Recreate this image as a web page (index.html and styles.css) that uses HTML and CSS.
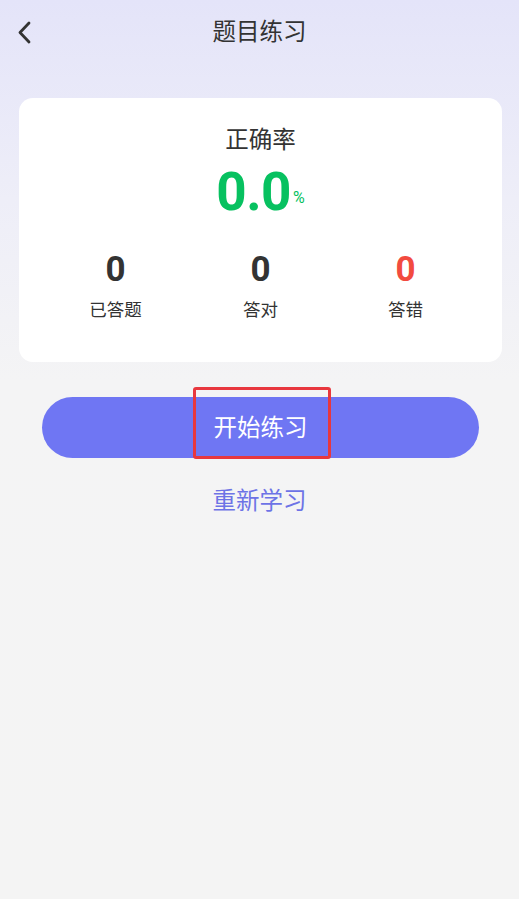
FILE: index.html
```html
<!DOCTYPE html>
<html lang="zh-CN">
<head>
<meta charset="utf-8">
<title>题目练习</title>
<link rel="stylesheet" href="styles.css">
</head>
<body>
<div class="page">
  <header class="navbar">
    <div class="back">
      <svg width="16" height="24" viewBox="0 0 16 24"><path d="M12 2 L3 11.5 L12 21" fill="none" stroke="#333" stroke-width="2.8" stroke-linecap="round" stroke-linejoin="round"/></svg>
    </div>
    <div class="title">题目练习</div>
    <div class="spacer"></div>
  </header>

  <section class="card">
    <div class="rate-label">正确率</div>
    <div class="rate"><span class="rate-num">0.0</span><span class="rate-unit">%</span></div>
    <div class="stats">
      <div class="stat"><div class="stat-num">0</div><div class="stat-label">已答题</div></div>
      <div class="stat"><div class="stat-num">0</div><div class="stat-label">答对</div></div>
      <div class="stat"><div class="stat-num wrong">0</div><div class="stat-label">答错</div></div>
    </div>
  </section>

  <div class="actions">
    <div class="btn-start">
      <span>开始练习</span>
      <div class="highlight"></div>
    </div>
    <div class="relearn">重新学习</div>
  </div>
</div>
</body>
</html>
```

FILE: styles.css
```css
html, body {
  margin: 0;
  padding: 0;
}
body {
  width: 519px;
  min-height: 899px;
  background: linear-gradient(180deg, #e4e4f9 0px, #eeeef8 200px, #f4f4f5 380px, #f4f4f4 100%);
  font-family: "Noto Sans CJK SC", "Noto Sans", sans-serif;
  color: #333;
}
.page {
  display: flex;
  flex-direction: column;
}
.navbar {
  height: 66px;
  box-sizing: border-box;
  padding-bottom: 6px;
  display: grid;
  grid-template-columns: 60px 1fr 60px;
  align-items: center;
}
.back {
  display: flex;
  align-items: center;
  padding-left: 17px;
  padding-top: 6px;
  height: 24px;
}
.back svg { display: block; }
.title {
  text-align: center;
  font-size: 23.5px;
  line-height: 30px;
  color: #333;
}
.card {
  margin: 32px 17px 0 19px;
  background: #fff;
  border-radius: 14px;
  padding: 24px 24px 40px;
  display: flex;
  flex-direction: column;
  align-items: center;
}
.rate-label {
  font-size: 23.5px;
  line-height: 32px;
  color: #333;
}
.rate {
  margin-top: 8px;
  display: flex;
  align-items: baseline;
  color: #07c160;
}
.rate-num {
  font-family: Roboto, "Noto Sans", sans-serif;
  font-weight: 700;
  font-size: 53px;
  line-height: 60px;
  letter-spacing: -0.5px;
}
.rate-unit {
  font-family: Roboto, "Noto Sans", sans-serif;
  font-size: 16px;
  margin-left: 2px;
  position: relative;
  top: -7px;
}
.stats {
  align-self: stretch;
  display: grid;
  grid-template-columns: repeat(3, 1fr);
  margin-top: 28px;
}
.stat {
  display: flex;
  flex-direction: column;
  align-items: center;
}
.stat-num {
  font-family: Roboto, "Noto Sans", sans-serif;
  font-weight: 700;
  font-size: 35px;
  line-height: 40px;
  color: #333;
}
.stat-num.wrong { color: #f24b3f; }
.stat-label {
  font-size: 17.5px;
  line-height: 26px;
  margin-top: 6px;
  color: #333;
}
.actions {
  display: flex;
  flex-direction: column;
  align-items: center;
  margin-top: 35px;
}
.btn-start {
  position: relative;
  width: 437px;
  height: 61px;
  margin-left: 2px;
  border-radius: 31px;
  background: #6f76f3;
  color: #fff;
  font-size: 23.5px;
  display: flex;
  align-items: center;
  justify-content: center;
}
.btn-start span {
  margin-top: -3px;
}
.highlight {
  position: absolute;
  left: 151px;
  top: -10px;
  width: 138px;
  height: 72px;
  box-sizing: border-box;
  border: 3px solid #e8373e;
  border-radius: 3px;
}
.relearn {
  margin-top: 26px;
  font-size: 23.5px;
  line-height: 30px;
  color: #6d73e6;
}
```
